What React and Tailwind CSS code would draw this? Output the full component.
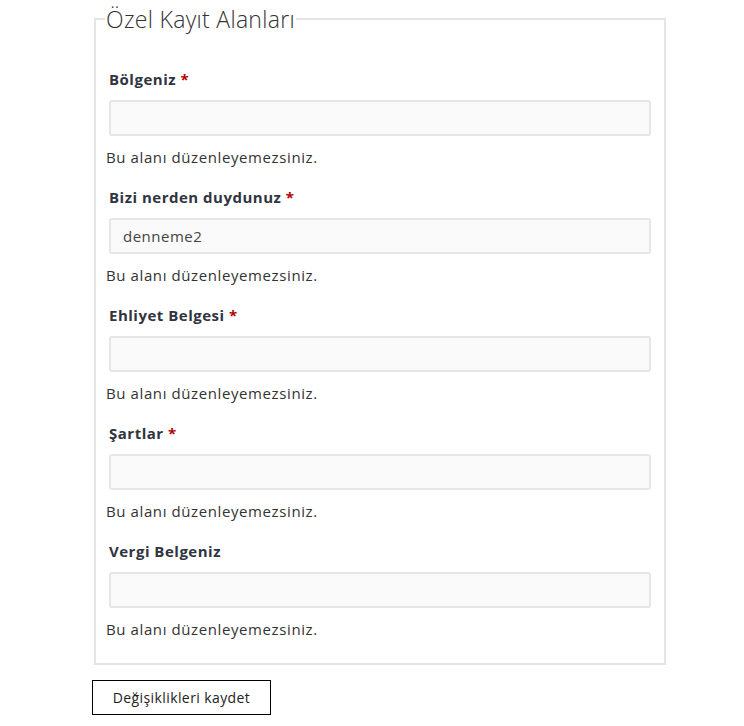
import React from 'react';

const fields = [
  { label: 'Bölgeniz', required: true, value: '' },
  { label: 'Bizi nerden duydunuz', required: true, value: 'denneme2' },
  { label: 'Ehliyet Belgesi', required: true, value: '' },
  { label: 'Şartlar', required: true, value: '' },
  { label: 'Vergi Belgeniz', required: false, value: '' },
];

const Field = ({ label, required, value }) => (
  <div className="mb-[18px] last:mb-0">
    <div className="mx-[3px]">
      <label className="block text-[15px] leading-[22px] font-bold tracking-[0.5px] text-[#30343f] mb-[10px]">
        {label} {required && <span className="text-[#b30000]">*</span>}
      </label>
      <input
        type="text"
        readOnly
        value={value}
        className="block w-full h-[36px] bg-[#fafafa] border-2 border-[#e6e6e6] rounded-[3px] px-[12px] text-[15px] tracking-[0.5px] text-[#444] outline-none"
      />
    </div>
    <p className="mt-[10px] text-[15px] leading-[22px] tracking-[0.6px] text-[#333]">Bu alanı düzenleyemezsiniz.</p>
  </div>
);

const App = () => {
  return (
    <div className="bg-white min-h-screen pt-[6px]" style={{ fontFamily: '"Open Sans", "Noto Sans", sans-serif' }}>
      <fieldset className="ml-[94px] w-[572px] border-2 border-[#e5e5e5] px-[10px] pt-[36px] pb-[23px]">
        <legend className="ml-[-1px] px-[1px] text-[23px] leading-[26px] font-light tracking-[0.3px] text-[#333]">Özel Kayıt Alanları</legend>
        {fields.map((f) => (
          <Field key={f.label} {...f} />
        ))}
      </fieldset>
      <button className="mt-[15px] ml-[92px] w-[179px] h-[35px] border border-black bg-white text-[14px] tracking-[0.4px] text-[#222]">
        Değişiklikleri kaydet
      </button>
    </div>
  );
};

export default App;
